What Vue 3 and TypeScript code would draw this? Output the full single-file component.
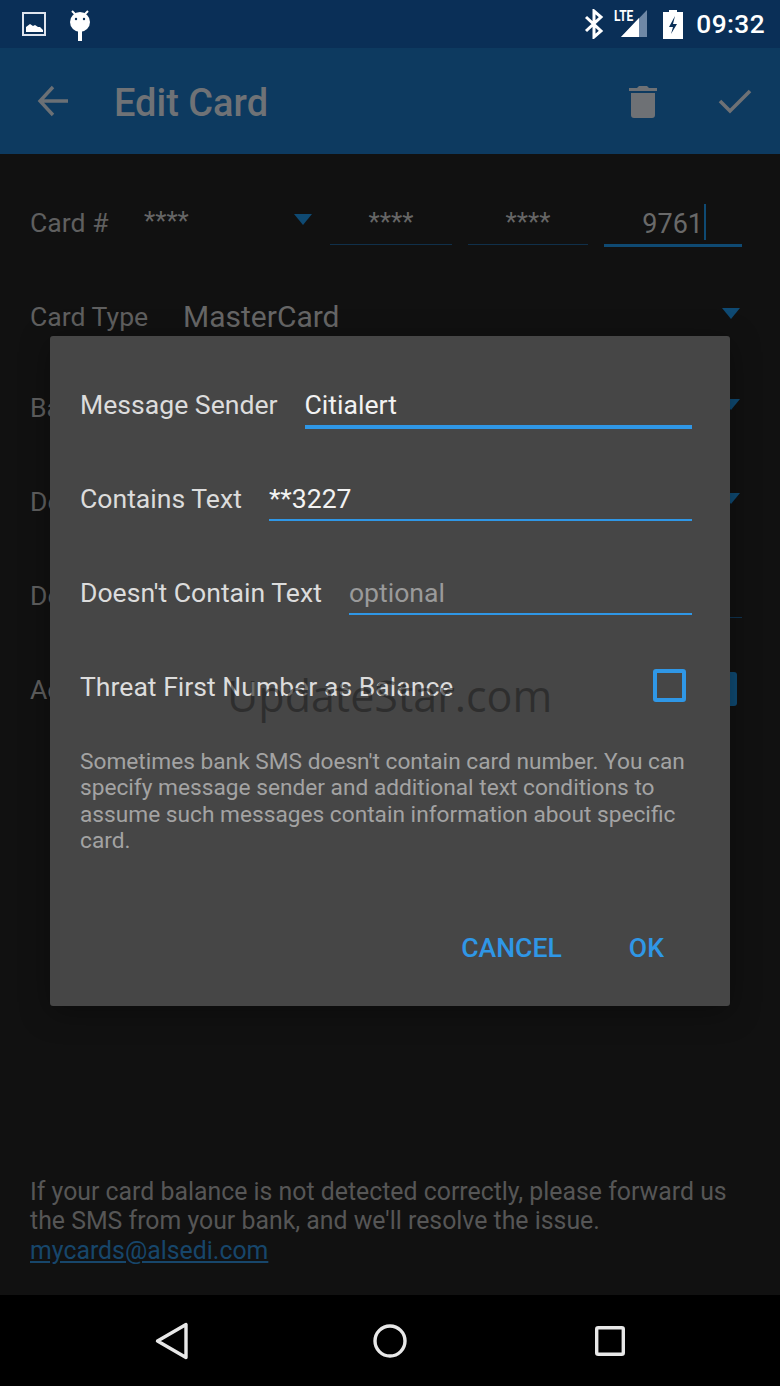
<template>
  <div class="screen">
    <div class="status-bar">
      <svg class="st-img" width="24" height="24" viewBox="0 0 24 24">
        <rect x="1" y="1" width="22" height="22" fill="none" stroke="#dfe5ee" stroke-width="2" />
        <path d="M4 20v-5l4-3 3 2 2-1 3 2 2 0 3 3v2z" fill="#fff" />
      </svg>
      <svg class="st-cat" width="24" height="32" viewBox="0 0 24 32">
        <path d="M4 2l4 4M20 2l-4 4" stroke="#fff" stroke-width="2" />
        <circle cx="12" cy="13" r="10" fill="#fff" />
        <circle cx="8" cy="10" r="1.2" fill="#0a2f57" />
        <circle cx="16" cy="10" r="1.2" fill="#0a2f57" />
        <rect x="10" y="22" width="4" height="10" fill="#fff" />
      </svg>
      <div class="st-spacer"></div>
      <svg class="st-bt" width="20" height="30" viewBox="0 0 20 30">
        <path d="M2 8l15 14-7 6V2l7 6L2 22" fill="none" stroke="#fff" stroke-width="3" />
      </svg>
      <div class="st-signal">
        <svg width="34" height="30" viewBox="0 0 34 30">
          <path d="M33 1v27H7z" fill="#6f88a6" />
          <path d="M25 9v19H7z" fill="#fff" />
        </svg>
        <span class="st-lte">LTE</span>
      </div>
      <svg class="st-bat" width="20" height="29" viewBox="0 0 20 29">
        <path d="M6 0h8v2h6v27H0V2h6z" fill="#fff" />
        <path d="M12 6l-6 11h4l-2 7 6-10h-4l2-8z" fill="#0a2f57" />
      </svg>
      <span class="st-time">09:32</span>
    </div>

    <div class="toolbar">
      <svg width="34" height="34" viewBox="0 0 34 34" class="tb-back">
        <path d="M31 17H4M16 3L3 17l13 14" fill="none" stroke="#6b7075" stroke-width="3.4" />
      </svg>
      <span class="tb-title">Edit Card</span>
      <div class="st-spacer"></div>
      <svg width="28" height="36" viewBox="0 0 28 36" class="tb-trash">
        <path d="M0 8V5h8l2-2h8l2 2h8v3z" fill="#6e7175" />
        <path d="M2 10h24v22a3 3 0 0 1-3 3H5a3 3 0 0 1-3-3z" fill="#6e7175" />
      </svg>
      <svg width="34" height="26" viewBox="0 0 34 26" class="tb-check">
        <path d="M2 13l10 10L32 3" fill="none" stroke="#6e7175" stroke-width="3.6" />
      </svg>
    </div>

    <div class="content">
      <div class="card-row">
        <span class="lbl">Card #</span>
        <div class="card-select">
          <span class="stars first">****</span>
          <i class="tri"></i>
        </div>
        <div class="seg seg-a"><span class="stars">****</span></div>
        <div class="seg seg-b"><span class="stars">****</span></div>
        <div class="seg seg-c"><span class="num">9761</span><i class="caret"></i></div>
      </div>
      <div class="type-row">
        <span class="lbl">Card Type</span>
        <span class="type-val">MasterCard</span>
        <i class="tri"></i>
      </div>
      <div class="bg-row bg-balance">
        <span class="lbl">Balance</span>
        <i class="tri"></i>
      </div>
      <div class="bg-row bg-d1">
        <span class="lbl">Default</span>
        <i class="tri"></i>
      </div>
      <div class="bg-row bg-d2">
        <span class="lbl">Default</span>
        <div class="bg-line"></div>
      </div>
      <div class="bg-row bg-a">
        <span class="lbl">Active</span>
        <i class="bg-box"></i>
      </div>

      <div class="spacer-grow"></div>

      <p class="note">
        If your card balance is not detected correctly, please forward us<br />
        the SMS from your bank, and we'll resolve the issue.<br />
        <a class="mail">mycards@alsedi.com</a>
      </p>
    </div>

    <div class="nav-bar">
      <svg width="34" height="38" viewBox="0 0 34 38">
        <path d="M31 2.500v33L2.500 19z" fill="none" stroke="#e8e8e8" stroke-width="3.400" stroke-linejoin="round" />
      </svg>
      <svg class="nav-home" width="34" height="34" viewBox="0 0 34 34">
        <circle cx="17" cy="17" r="15" fill="none" stroke="#e8e8e8" stroke-width="3.400" />
      </svg>
      <svg width="30" height="30" viewBox="0 0 30 30">
        <rect x="1.700" y="1.700" width="26.600" height="26.600" rx="1.500" fill="none" stroke="#e8e8e8" stroke-width="3.400" />
      </svg>
    </div>

    <div class="dialog">
      <div v-for="f in fields" :key="f.label" class="field">
        <span class="dlg-lbl">{{ f.label }}</span>
        <div class="input" :class="{ focused: f.focused }">
          <span :class="f.hint ? 'hint' : 'val'">{{ f.value }}</span>
        </div>
      </div>
      <div class="check-row">
        <span class="dlg-lbl">Threat First Number as Balance</span>
        <i class="check"></i>
      </div>
      <p class="help">
        Sometimes bank SMS doesn't contain card number. You can specify message sender and additional text conditions to assume such messages contain information about specific card.
      </p>
      <div class="actions">
        <button>CANCEL</button>
        <button>OK</button>
      </div>
    </div>

    <div class="watermark">UpdateStar.com</div>
  </div>
</template>

<script setup lang="ts">
interface Field {
  label: string
  value: string
  hint?: boolean
  focused?: boolean
}

const fields: Field[] = [
  { label: 'Message Sender', value: 'Citialert', focused: true },
  { label: 'Contains Text', value: '**3227' },
  { label: "Doesn't Contain Text", value: 'optional', hint: true }
]
</script>

<style>
html,
body {
  margin: 0;
  background: #111;
}
</style>

<style scoped>
.screen {
  position: relative;
  width: 780px;
  height: 1386px;
  overflow: hidden;
  display: flex;
  flex-direction: column;
  background: #111;
  font-family: Roboto, "Liberation Sans", sans-serif;
  color: #6a6a6a;
}
.status-bar {
  height: 48px;
  flex: none;
  display: flex;
  align-items: center;
  padding: 0 15px 0 22px;
  background: #0a2f57;
  box-sizing: border-box;
}
.st-cat {
  margin-left: 22px;
  margin-top: 1px;
}
.st-spacer {
  flex: 1;
}
.st-bt {
  margin-right: 10px;
}
.st-signal {
  position: relative;
  width: 34px;
  height: 30px;
  margin-right: 15px;
}
.st-lte {
  position: absolute;
  left: 0;
  top: -2px;
  font-size: 15px;
  font-weight: 700;
  color: #fff;
  transform: scaleX(0.8);
  transform-origin: left top;
}
.st-bat {
  margin-right: 13px;
}
.st-time {
  color: #fff;
  font-size: 26.3px;
  font-weight: 500;
  letter-spacing: 0.4px;
}
.toolbar {
  height: 106px;
  flex: none;
  display: flex;
  align-items: center;
  background: #0d3a60;
  padding: 0 28px 0 37px;
  box-sizing: border-box;
}
.tb-title {
  margin-left: 43px;
  margin-top: 3px;
  font-size: 38px;
  font-weight: 500;
  color: #6f7276;
}
.tb-trash {
  margin-right: 61px;
}
.content {
  flex: 1;
  display: flex;
  flex-direction: column;
  padding: 0 38px 0 30px;
  background: #111;
}
.lbl {
  font-size: 26.6px;
  color: #5f5f5f;
}
.card-row {
  display: flex;
  align-items: flex-start;
  height: 91px;
  padding-top: 53px;
}
.card-row .lbl {
  width: 114px;
  flex: none;
}
.card-select {
  width: 168px;
  flex: none;
  display: flex;
  justify-content: space-between;
  padding-top: 7px;
  margin-right: 18px;
}
.tri {
  display: block;
  width: 0;
  height: 0;
  border-left: 9px solid transparent;
  border-right: 9px solid transparent;
  border-top: 11px solid #0f4a73;
}
.type-row .tri {
  margin-right: 2px;
  margin-top: -5px;
}
.bg-balance .tri,
.bg-d1 .tri {
  margin-right: 2px;
  margin-top: -6px;
}
.stars {
  font-size: 26px;
  color: #666;
  line-height: 30px;
}
.stars.first {
  margin-top: -8px;
}
.seg {
  flex: none;
  height: 37px;
  margin-right: 16px;
  text-align: center;
  border-bottom: 1px solid #10304a;
  line-height: 34px;
}
.seg-a {
  width: 122px;
}
.seg-b {
  width: 120px;
}
.seg-c {
  margin-right: 0;
  border-bottom: 3px solid #0f4a73;
  display: flex;
  justify-content: flex-end;
  padding-right: 36px;
  width: 102px;
}
.num {
  font-size: 27px;
  color: #696969;
}
.caret {
  display: block;
  width: 2px;
  height: 36px;
  background: #0f4a73;
  margin-left: 1px;
  margin-top: -3px;
}
.type-row {
  display: flex;
  align-items: center;
  height: 36px;
}
.type-row .lbl {
  width: 153px;
}
.type-val {
  flex: 1;
  font-size: 30px;
  color: #666;
}
.bg-row {
  display: flex;
  align-items: center;
  justify-content: space-between;
  height: 36px;
  margin-top: 58px;
}
.bg-balance {
  margin-top: 55px;
}
.bg-line {
  flex: 1;
  margin-left: 20px;
  margin-top: 44px;
  height: 1px;
  background: #0f3350;
}
.bg-box {
  display: block;
  width: 22px;
  height: 34px;
  border-radius: 3px;
  background: #0f4a73;
  margin-right: 5px;
}
.spacer-grow {
  flex: 1;
}
.note {
  margin: 0 0 30px;
  font-size: 24.85px;
  line-height: 29.5px;
  color: #565656;
}
.mail {
  color: #17466b;
  text-decoration: underline;
}
.nav-bar {
  height: 91px;
  flex: none;
  background: #000;
  display: flex;
  align-items: center;
  padding-left: 155px;
}
.nav-home {
  margin: 0 188px 0 184px;
}
.dialog {
  position: absolute;
  left: 50px;
  top: 336px;
  width: 680px;
  height: 670px;
  box-sizing: border-box;
  padding: 22px 38px 0 30px;
  background: #464646;
  border-radius: 3px;
  box-shadow: 0 6px 30px rgba(0, 0, 0, 0.35);
}
.field {
  display: flex;
  height: 94px;
  align-items: flex-start;
  padding-top: 28px;
  box-sizing: border-box;
}
.dlg-lbl {
  font-size: 26.6px;
  line-height: 38px;
  color: #dcdcdc;
  margin-right: 27px;
  white-space: nowrap;
}
.input {
  flex: 1;
  height: 39px;
  border-bottom: 2px solid #2f97e6;
  line-height: 38px;
  font-size: 26.6px;
}
.input.focused {
  border-bottom-width: 4px;
}
.val {
  color: #f2f2f2;
}
.hint {
  color: #9a9a9a;
}
.check-row {
  display: flex;
  justify-content: space-between;
  align-items: center;
  height: 50px;
  padding-top: 22px;
}
.check {
  display: block;
  width: 33px;
  height: 33px;
  box-sizing: border-box;
  border: 4px solid #2f97e6;
  border-radius: 3px;
  margin-right: 6px;
  margin-top: -4px;
}
.help {
  margin: 37px 0 0;
  font-size: 22.7px;
  line-height: 26.3px;
  color: #a3a3a3;
}
.actions {
  position: absolute;
  right: 66px;
  top: 596px;
  display: flex;
  gap: 67px;
}
.actions button {
  border: 0;
  padding: 0;
  background: transparent;
  font-family: inherit;
  font-size: 26.6px;
  font-weight: 500;
  color: #2f97e6;
}
.watermark {
  position: absolute;
  left: 227px;
  top: 668px;
  font-family: "Open Sans", sans-serif;
  font-size: 43px;
  line-height: 56px;
  color: rgba(30, 30, 30, 0.6);
  pointer-events: none;
}
</style>
